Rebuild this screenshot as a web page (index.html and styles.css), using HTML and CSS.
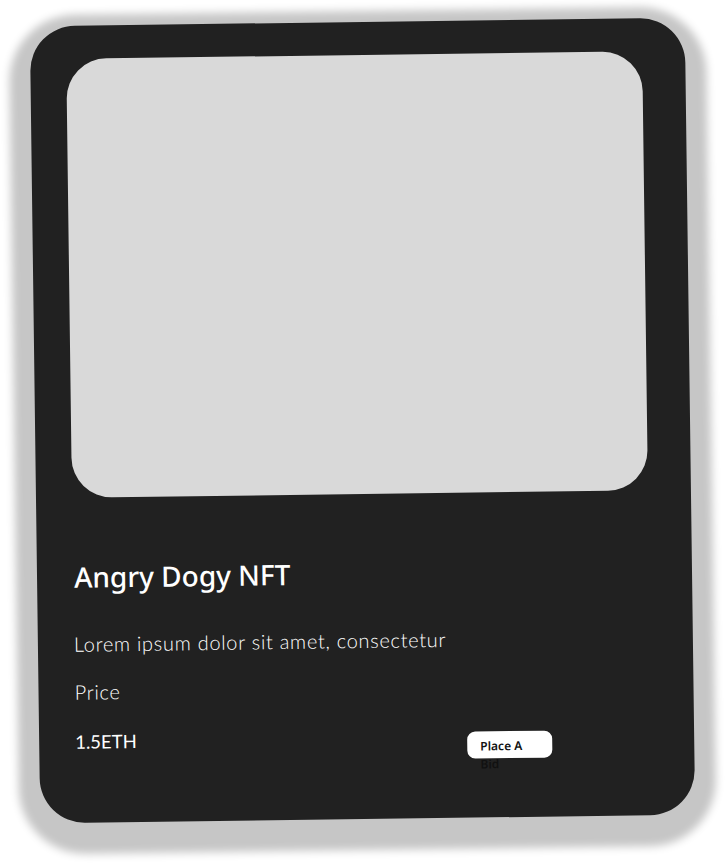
FILE: index.html
```html
<!DOCTYPE html>
<html lang="en">
<head>
<meta charset="utf-8">
<title>Angry Dogy NFT</title>
<link rel="stylesheet" href="styles.css">
</head>
<body>
  <div class="card">
    <div class="card-image"></div>
    <h2 class="card-title">Angry Dogy NFT</h2>
    <p class="card-desc">Lorem ipsum dolor sit amet, consectetur</p>
    <p class="card-label">Price</p>
    <div class="card-row">
      <span class="card-price">1.5ETH</span>
      <button class="bid-btn">Place A Bid</button>
    </div>
  </div>
</body>
</html>
```

FILE: styles.css
```css
html, body {
  margin: 0;
  padding: 0;
  background: #ffffff;
}

body {
  padding: 22px 0 0 35px;
  height: 865px;
  box-sizing: border-box;
  overflow: hidden;
}

.card {
  width: 655px;
  height: 797px;
  box-sizing: border-box;
  padding: 33px 43px 0 36px;
  background: #212121;
  border-radius: 45px;
  box-shadow: 0 10px 8px 21px #c6c6c6;
  transform: rotate(-0.75deg);
  display: flex;
  flex-direction: column;
}

.card-image {
  width: 576px;
  height: 439px;
  background: #d9d9d9;
  border-radius: 40px;
  flex: none;
}

.card-title {
  margin: 62px 0 0 1px;
  font-family: "Noto Sans", "Open Sans", sans-serif;
  font-weight: 500;
  font-size: 28px;
  line-height: 34px;
  color: #ffffff;
}

.card-desc {
  margin: 38px 0 0;
  font-family: Lato, "Noto Sans", sans-serif;
  font-weight: 300;
  font-size: 20px;
  line-height: 24px;
  letter-spacing: 0.7px;
  color: #ffffff;
}

.card-label {
  margin: 24px 0 0;
  font-family: Lato, "Noto Sans", sans-serif;
  font-weight: 300;
  font-size: 20px;
  line-height: 24px;
  letter-spacing: 0.7px;
  color: #ffffff;
}

.card-row {
  margin-top: 26px;
  display: grid;
  grid-template-columns: 392px 85px;
  align-items: start;
}

.card-price {
  font-family: Lato, "Noto Sans", sans-serif;
  font-weight: 400;
  font-size: 18.5px;
  line-height: 24px;
  color: #ffffff;
}

.bid-btn {
  margin-top: 7px;
  width: 85px;
  height: 27px;
  box-sizing: border-box;
  padding: 6px 13px 0;
  border: none;
  border-radius: 8px;
  background: #ffffff;
  color: #111111;
  font-family: "Noto Sans", sans-serif;
  font-weight: 600;
  font-size: 12px;
  line-height: 18px;
  text-align: left;
  display: block;
  overflow: visible;
  white-space: normal;
}
```
